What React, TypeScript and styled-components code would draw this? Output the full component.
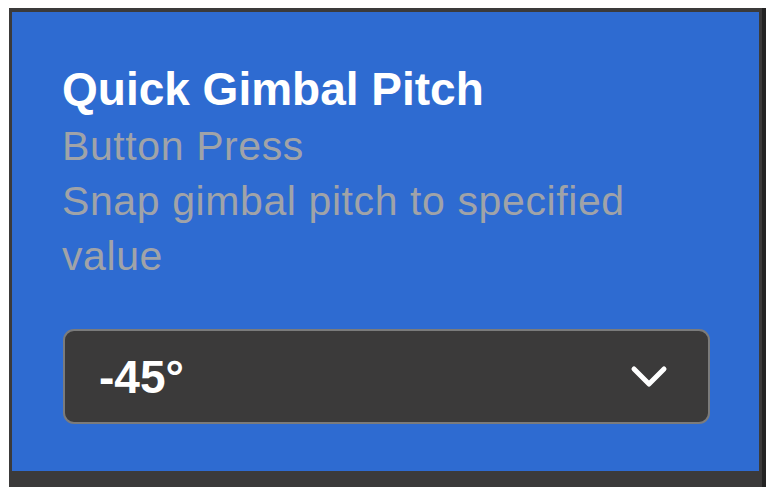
import styled, { createGlobalStyle } from "styled-components"

const GlobalStyle = createGlobalStyle`
  html, body {
    margin: 0;
    padding: 0;
    background: #ffffff;
  }
  body {
    font-family: "Liberation Sans", Arial, Helvetica, sans-serif;
  }
`

const Frame = styled.div`
  box-sizing: border-box;
  width: 757px;
  margin: 8px 0 0 9px;
  padding: 4px 3px 16px 3px;
  background: #3b3a3a;
  border-right: 4px solid #232323;
`

const Panel = styled.section`
  box-sizing: border-box;
  background: #2e6bd1;
  padding: 50px 49px 47px 50px;
`

const Title = styled.h1`
  margin: 0;
  font-size: 46px;
  line-height: 54px;
  font-weight: 700;
  color: #ffffff;
`

const SubText = styled.p<{ $gap?: number }>`
  margin: ${(p) => p.$gap ?? 0}px 0 0;
  font-size: 41px;
  line-height: 55px;
  font-weight: 400;
  letter-spacing: 0.6px;
  color: #a0a3a8;
`

const Select = styled.div`
  box-sizing: border-box;
  height: 95px;
  margin: 45px 0 0 1px;
  display: flex;
  align-items: center;
  justify-content: space-between;
  padding: 0 40px 0 34px;
  background: #3b3a3a;
  border: 2px solid #7b7b7b;
  border-radius: 11px;
`

const SelectValue = styled.span`
  font-size: 46px;
  line-height: 1;
  font-weight: 700;
  color: #ffffff;
`

const Chevron = () => (
  <svg width="38" height="26" viewBox="0 0 38 26" fill="none">
    <path
      d="M4 5 L19 20 L34 5"
      stroke="#ffffff"
      strokeWidth="5"
      strokeLinecap="round"
      strokeLinejoin="round"
    />
  </svg>
)

function App() {
  return (
    <>
      <GlobalStyle />
      <Frame>
        <Panel>
          <Title>Quick Gimbal Pitch</Title>
          <SubText $gap={3}>Button Press</SubText>
          <SubText>Snap gimbal pitch to specified value</SubText>
          <Select>
            <SelectValue>-45°</SelectValue>
            <Chevron />
          </Select>
        </Panel>
      </Frame>
    </>
  )
}

export default App
